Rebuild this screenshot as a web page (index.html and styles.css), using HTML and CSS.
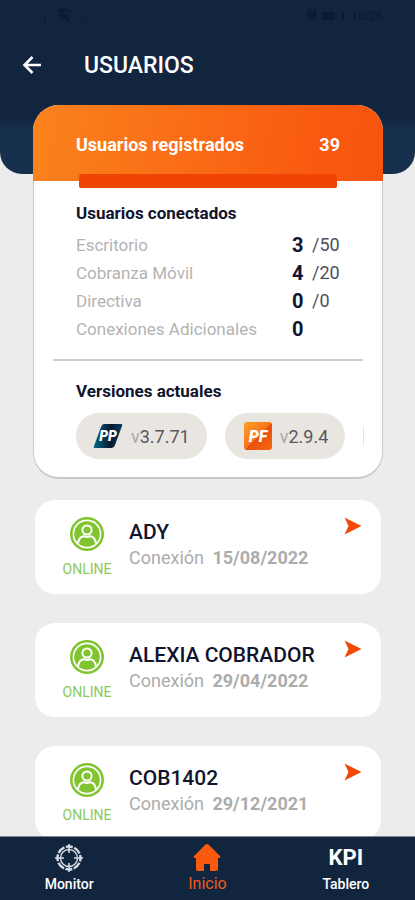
FILE: index.html
```html
<!DOCTYPE html>
<html lang="es">
<head>
<meta charset="utf-8">
<meta name="viewport" content="width=device-width, initial-scale=1">
<title>Usuarios</title>
<link rel="stylesheet" href="styles.css">
</head>
<body>
<svg width="0" height="0" class="defs" aria-hidden="true">
  <symbol id="avatar" viewBox="0 0 34 34">
    <circle cx="17" cy="17" r="17" fill="#80c42f"/>
    <circle cx="17" cy="17" r="13.6" fill="none" stroke="#fff" stroke-width="1.6"/>
    <circle cx="17" cy="13" r="4.6" fill="none" stroke="#fff" stroke-width="2"/>
    <path d="M8 26.500c.8-5.200 3.800-7.300 6.200-7.300 1.800 1 3.800 1 5.600 0 2.400 0 5.400 2.100 6.200 7.300" fill="none" stroke="#fff" stroke-width="2"/>
  </symbol>
  <symbol id="pointer" viewBox="0 0 18 18">
    <path d="M.5.5 17.500 9 .5 17.500 4.500 9z" fill="#f24a06"/>
  </symbol>
</svg>
<header class="hero">
  <div class="status">
    <div class="status-group">
      <svg width="46" height="16" viewBox="0 0 46 16" fill="none" stroke="#0b1a2f" stroke-width="2"><path d="M3 9v4M15 4q7-5 13 0M17 8q5-3 9 0M19 11q3-2 5 0M17 1l10 12M37 13h2M42 11h2"/></svg>
    </div>
    <div class="status-group">
      <svg width="42" height="16" viewBox="0 0 42 16" fill="none" stroke="#0b1a2f" stroke-width="2"><circle cx="7" cy="8" r="4"/><path d="M2 4l3-3M9 1l3 3M5 7l2 2 3-3M38 4v8"/><rect x="19" y="5" width="10" height="6" fill="#0b1a2f"/></svg>
      <span>10:26</span>
    </div>
  </div>
  <div class="title-row">
    <button class="back" type="button" aria-label="Volver">
      <svg width="20" height="20" viewBox="0 0 20 20" fill="none" stroke="#fff" stroke-width="2.600"><path d="M19 9H2M10.500 1 2.500 9l8 8"/></svg>
    </button>
    <h1>USUARIOS</h1>
  </div>
</header>
<main>
  <section class="summary">
    <div class="summary-head">
      <h2>Usuarios registrados</h2>
      <strong>39</strong>
      <div class="accent"></div>
    </div>
    <div class="connected">
      <h3>Usuarios conectados</h3>
      <table>
        <tr><th scope="row">Escritorio</th><td><b>3</b></td><td>/50</td></tr>
        <tr><th scope="row">Cobranza Móvil</th><td><b>4</b></td><td>/20</td></tr>
        <tr><th scope="row">Directiva</th><td><b>0</b></td><td>/0</td></tr>
        <tr><th scope="row">Conexiones Adicionales</th><td><b>0</b></td><td></td></tr>
      </table>
    </div>
    <hr>
    <div class="versions">
      <h3>Versiones actuales</h3>
      <div class="chips">
        <div class="chip">
          <svg width="30" height="28" viewBox="0 0 30 28"><defs><linearGradient id="g1"><stop stop-color="#08698b"/><stop offset=".6" stop-color="#061a30"/><stop offset="1" stop-color="#063f5c"/></linearGradient></defs><path d="M11 2h17q2 0 1 2l-7 19q-1 3-4 3H2q-2 0-1-2L8 5q1-3 3-3z" fill="url(#g1)"/><text x="15" y="19" class="logo">PP</text></svg>
          <span><i>v</i>3.7.71</span>
        </div>
        <div class="chip">
          <svg width="30" height="28" viewBox="-2 0 30 28"><defs><linearGradient id="g2" x2="1" y2="1"><stop stop-color="#ffa024"/><stop offset=".5" stop-color="#f7761b"/><stop offset=".52" stop-color="#e94e0c"/><stop offset="1" stop-color="#f46b12"/></linearGradient></defs><rect width="28" height="28" rx="3" fill="url(#g2)"/><text x="14" y="20" class="logo logo-large">PF</text></svg>
          <span><i>v</i>2.9.4</span>
        </div>
        <div class="chip"></div>
      </div>
    </div>
  </section>
  <ul class="users">
    <li class="user">
      <div class="state"><svg width="34" height="34"><use href="#avatar"/></svg><span>ONLINE</span></div>
      <div class="info"><h2>ADY</h2><p>Conexión <b>15/08/2022</b></p></div>
      <button type="button" aria-label="Ver ADY"><svg width="18" height="18"><use href="#pointer"/></svg></button>
    </li>
    <li class="user">
      <div class="state"><svg width="34" height="34"><use href="#avatar"/></svg><span>ONLINE</span></div>
      <div class="info"><h2>ALEXIA COBRADOR</h2><p>Conexión <b>29/04/2022</b></p></div>
      <button type="button" aria-label="Ver ALEXIA COBRADOR"><svg width="18" height="18"><use href="#pointer"/></svg></button>
    </li>
    <li class="user">
      <div class="state"><svg width="34" height="34"><use href="#avatar"/></svg><span>ONLINE</span></div>
      <div class="info"><h2>COB1402</h2><p>Conexión <b>29/12/2021</b></p></div>
      <button type="button" aria-label="Ver COB1402"><svg width="18" height="18"><use href="#pointer"/></svg></button>
    </li>
  </ul>
</main>
<nav class="tabs">
  <a href="#monitor">
    <svg width="28" height="28" viewBox="0 0 28 28" fill="none" stroke="#d5dce3"><circle cx="14" cy="14" r="8.500" stroke-width="1.400"/><circle cx="14" cy="14" r="11.500" stroke-width="2.400" stroke-dasharray="3.500 1.500 8.060 1.500 3.500 0"/><path d="M14 0v9M14 19v9M0 14h9M19 14h9" stroke-width="1.600"/></svg>
    <span>Monitor</span>
  </a>
  <a href="#inicio" class="active" aria-current="page">
    <svg width="28" height="28" viewBox="0 0 28 28"><path d="M14 0q1 0 2 1l11 11q1 2-1 2h-1v11q0 2-2 2h-6v-7h-6v7H5q-2 0-2-2V14H2q-2 0-1-2L12 1q1-1 2-1z" fill="#f95a0b"/></svg>
    <span>Inicio</span>
  </a>
  <a href="#tablero">
    <strong class="kpi">KPI</strong>
    <span>Tablero</span>
  </a>
</nav>
</body>
</html>
```
FILE: styles.css
```css
* {
  box-sizing: border-box;
  margin: 0;
  padding: 0;
}

body {
  height: 100vh;
  display: flex;
  flex-direction: column;
  background: #ececec;
  color: #11142e;
  font-family: Roboto, sans-serif;
}

.defs {
  position: absolute;
}

button {
  border: 0;
  background: none;
  cursor: pointer;
}

svg {
  display: block;
  flex: none;
}

.hero {
  flex: none;
  padding: 8px 32px 92px 22px;
  border-radius: 0 0 22px 22px;
  background: linear-gradient(#12253f 120px, #17304e 130px);
}

.status {
  display: flex;
  justify-content: space-between;
  padding-left: 20px;
  color: #0b1a2f;
  font-size: 13px;
  line-height: 16px;
}

.status-group {
  display: flex;
  gap: 4px;
}

.title-row {
  display: flex;
  align-items: center;
  gap: 42px;
  padding-top: 26px;
}

.title-row h1 {
  color: #fff;
  font-size: 23px;
  font-weight: 500;
  line-height: 32px;
}

main {
  flex: 1;
  min-height: 0;
  margin-top: -69px;
  padding: 0 32px 0 33px;
  overflow-y: auto;
  scrollbar-width: none;
}

.summary {
  padding-bottom: 18px;
  border: solid #c9c9c9;
  border-width: 0 1px 2px;
  border-radius: 26px;
  background: #fff;
}

.summary-head {
  position: relative;
  display: flex;
  align-items: center;
  justify-content: space-between;
  height: 76px;
  margin: 0 -1px;
  padding: 2px 43px 0;
  border-radius: 26px 26px 0 0;
  background: linear-gradient(100deg, #fa831d, #f95a10 80%, #f5540e);
  color: #fff;
  font-size: 18px;
}

.summary-head h2 {
  font-size: 18px;
  font-weight: 700;
}

.accent {
  position: absolute;
  right: 46px;
  bottom: -7px;
  left: 46px;
  height: 14px;
  border-radius: 2px;
  background: #f04404;
}

.connected {
  padding: 20px 42px 16px;
}

h3 {
  font-size: 17px;
  font-weight: 700;
  line-height: 24px;
}

table {
  width: 100%;
  margin-top: 6px;
  border-collapse: collapse;
}

th,
td {
  height: 28px;
  font-size: 18px;
  font-weight: 400;
  line-height: 24px;
  text-align: left;
  white-space: nowrap;
}

th {
  color: #b3b3b3;
  font-size: 17px;
}

td {
  width: 20px;
  color: #4d505e;
}

td:last-child {
  width: 28px;
}

td b {
  color: #11142e;
  font-size: 20px;
}

hr {
  margin: 0 19px;
  border: 0;
  border-top: 2px solid #cfcfcf;
}

.versions {
  padding: 18px 18px 0 42px;
}

.chips {
  display: flex;
  gap: 18px;
  margin-top: 10px;
  overflow: hidden;
}

.chip {
  flex: none;
  display: flex;
  align-items: center;
  gap: 8px;
  height: 46px;
  padding: 0 17px;
  border-radius: 23px;
  background: #e9e5e0;
  color: #555862;
  font-size: 18px;
}

.chip i {
  color: #aaa;
  font-style: normal;
}

.logo {
  fill: #fff;
  font-size: 14px;
  font-style: italic;
  font-weight: 900;
  text-anchor: middle;
}

.logo-large {
  font-size: 16px;
}

.users {
  display: grid;
  gap: 29px;
  padding: 21px 2px 29px;
  list-style: none;
}

.user {
  display: flex;
  align-items: flex-start;
  height: 94px;
  padding: 17px 19px 0 28px;
  border-radius: 20px;
  background: #fff;
}

.state {
  display: flex;
  flex-direction: column;
  align-items: center;
  gap: 9px;
  width: 48px;
  color: #8dc956;
  font-size: 14px;
  line-height: 18px;
}

.info {
  flex: 1;
  padding: 2px 0 0 18px;
}

.info h2 {
  font-size: 21px;
  font-weight: 500;
  line-height: 26px;
}

.info p {
  color: #acacac;
  font-size: 18px;
  line-height: 26px;
}

.info b {
  margin-left: 4px;
}

.tabs {
  z-index: 1;
  flex: none;
  display: grid;
  grid-template-columns: repeat(3, 1fr);
  height: 64px;
  border-top: 1px solid #7e8998;
  background: #12253f;
}

.tabs a {
  display: flex;
  flex-direction: column;
  align-items: center;
  padding-top: 7px;
  color: #fff;
  font-size: 14px;
  font-weight: 500;
  line-height: 24px;
  text-decoration: none;
}

.tabs .active {
  color: #ee5a1c;
  font-size: 16px;
  font-weight: 400;
}

.kpi {
  font-size: 22px;
  font-weight: 700;
  line-height: 28px;
}
```
